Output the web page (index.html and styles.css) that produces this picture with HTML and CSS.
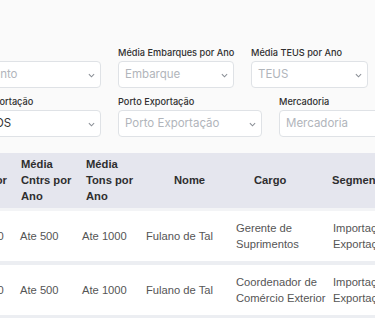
FILE: index.html
```html
<!DOCTYPE html>
<html lang="pt-BR">
<head>
    <meta charset="UTF-8">
    <meta name="viewport" content="width=device-width, initial-scale=1.0">
    <title>Contatos</title>
    <link rel="stylesheet" href="styles.css">
</head>
<body>
    <div class="page">
        <div class="filters">
            <div class="filter-row">
                <div class="field w-wide">
                    <label>Departamento</label>
                    <div class="control select placeholder">Departamento
                        <svg class="chevron" viewBox="0 0 8 5"><polyline points="1,1 4,4 7,1"/></svg>
                    </div>
                </div>
                <div class="field w-116">
                    <label>Média Embarques por Ano</label>
                    <div class="control select placeholder">Embarque
                        <svg class="chevron" viewBox="0 0 8 5"><polyline points="1,1 4,4 7,1"/></svg>
                    </div>
                </div>
                <div class="field w-117">
                    <label>Média TEUS por Ano</label>
                    <div class="control select placeholder">TEUS
                        <svg class="chevron" viewBox="0 0 8 5"><polyline points="1,1 4,4 7,1"/></svg>
                    </div>
                </div>
            </div>
            <div class="filter-row">
                <div class="field w-144">
                    <label>Porto Importação</label>
                    <div class="control select">SANTOS
                        <svg class="chevron" viewBox="0 0 8 5"><polyline points="1,1 4,4 7,1"/></svg>
                    </div>
                </div>
                <div class="field w-144">
                    <label>Porto Exportação</label>
                    <div class="control select placeholder">Porto Exportação
                        <svg class="chevron" viewBox="0 0 8 5"><polyline points="1,1 4,4 7,1"/></svg>
                    </div>
                </div>
                <div class="field w-144">
                    <label>Mercadoria</label>
                    <div class="control placeholder">Mercadoria</div>
                </div>
            </div>
        </div>

        <table class="results">
            <colgroup>
                <col class="c-teus">
                <col class="c-cntrs">
                <col class="c-tons">
                <col class="c-nome">
                <col class="c-cargo">
                <col class="c-seg">
            </colgroup>
            <thead>
                <tr>
                    <th>Média TEUS por Ano</th>
                    <th>Média Cntrs por Ano</th>
                    <th>Média Tons por Ano</th>
                    <th>Nome</th>
                    <th>Cargo</th>
                    <th>Segmento</th>
                </tr>
            </thead>
            <tbody>
                <tr>
                    <td>Ate 1000</td>
                    <td>Ate 500</td>
                    <td>Ate 1000</td>
                    <td>Fulano de Tal</td>
                    <td>Gerente de Suprimentos</td>
                    <td>Importação Exportação</td>
                </tr>
                <tr>
                    <td>Ate 1000</td>
                    <td>Ate 500</td>
                    <td>Ate 1000</td>
                    <td>Fulano de Tal</td>
                    <td>Coordenador de Comércio Exterior</td>
                    <td>Importação Exportação</td>
                </tr>
            </tbody>
        </table>
    </div>
</body>
</html>
```

FILE: styles.css
```css
html, body {
    overflow: hidden;
}
body {
    margin: 0;
    background: #fafafa;
    font-family: Inter, "Liberation Sans", sans-serif;
}
.page {
    margin-left: -49px;
    width: 600px;
}
.filters {
    padding: 47px 0 0 6px;
}
.filter-row {
    display: flex;
    gap: 17px;
    margin-bottom: 8px;
}
.field {
    display: flex;
    flex-direction: column;
    flex: none;
}
.w-wide { width: 168px; margin-left: -24px; }
.w-144 { width: 144px; }
.w-116 { width: 116px; }
.w-117 { width: 117px; }
.field label {
    font-size: 9.2px;
    line-height: 12px;
    font-weight: 500;
    color: #2f2f2f;
    margin-bottom: 2px;
    white-space: nowrap;
}
.control {
    position: relative;
    height: 27px;
    box-sizing: border-box;
    border: 1px solid #dfe2e6;
    border-radius: 4px;
    background: #fff;
    padding: 0 6px;
    font-size: 11.5px;
    line-height: 25px;
    color: #333;
    white-space: nowrap;
    overflow: hidden;
}
.control.placeholder {
    color: #b1b5bb;
}
.chevron {
    position: absolute;
    right: 5px;
    top: 11px;
    width: 7px;
    height: 5px;
    fill: none;
    stroke: #8a8f96;
    stroke-width: 1.2;
}
.results {
    margin-top: 16px;
    border-collapse: collapse;
    table-layout: fixed;
    width: 456px;
    font-family: "Liberation Sans", Arial, sans-serif;
    font-size: 11.2px;
    line-height: 16px;
}
.c-teus { width: 61px; }
.c-cntrs { width: 62px; }
.c-tons { width: 64px; }
.c-nome { width: 90px; }
.c-cargo { width: 99px; }
.c-seg { width: 80px; }
.results th {
    background: #e5e6ee;
    color: #2e2e2e;
    font-weight: bold;
    text-align: left;
    vertical-align: middle;
    padding: 3px 0 4px 5px;
    border-bottom: 3px solid #f3f4f6;
}
.results th:nth-child(2) { padding-left: 9px; }
.results th:nth-child(3) { padding-left: 12px; }
.results th:nth-child(4) { padding-left: 36px; }
.results th:nth-child(5) { padding-left: 26px; }
.results td {
    background: #fff;
    color: #555;
    padding: 9px 0 9px 8px;
    vertical-align: middle;
    border-bottom: 4px solid #eceef2;
}
.results td:nth-child(6) { padding-left: 6px; }
```
